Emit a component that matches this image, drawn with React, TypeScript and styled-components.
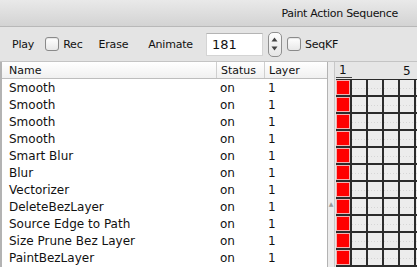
import React from "react";
import styled, { createGlobalStyle } from "styled-components";

const GlobalStyle = createGlobalStyle`
  html, body {
    margin: 0;
    padding: 0;
    width: 417px;
    height: 267px;
    overflow: hidden;
    background: #e6e6e6;
  }
  * { box-sizing: border-box; }
`;

const font = `"DejaVu Sans", "Lucida Grande", Verdana, sans-serif`;

const Window = styled.div`
  width: 417px;
  height: 267px;
  display: flex;
  flex-direction: column;
  font-family: ${font};
  color: #111;
  overflow: hidden;
`;

const TitleBar = styled.div`
  height: 27px;
  flex-shrink: 0;
  display: flex;
  align-items: center;
  justify-content: flex-end;
  padding-right: 19px;
  font-size: 11px;
  letter-spacing: -0.3px;
  background: linear-gradient(#e9e9e9, #d3d3d3);
  border-bottom: 1px solid #b8b8b8;
`;

const Toolbar = styled.div`
  height: 34px;
  flex-shrink: 0;
  display: flex;
  align-items: center;
  padding-left: 12px;
  font-size: 11px;
  letter-spacing: -0.2px;
  background: #e4e4e4;
`;

const Label = styled.span<{ $ml?: number }>`
  margin-left: ${(p) => p.$ml ?? 0}px;
`;

const Check = styled.span<{ $ml?: number }>`
  display: inline-block;
  flex-shrink: 0;
  width: 14px;
  height: 14px;
  margin-left: ${(p) => p.$ml ?? 0}px;
  margin-right: 4px;
  border: 1px solid #8a8a8a;
  border-radius: 3px;
  background: linear-gradient(#ffffff, #e8e8e8);
  box-shadow: inset 0 1px 1px rgba(0, 0, 0, 0.1);
`;

const NumberField = styled.div`
  width: 57px;
  height: 23px;
  flex-shrink: 0;
  margin-left: 13px;
  padding: 3px 0 0 5px;
  background: #fff;
  border: 1px solid #d4d4d4;
  border-top-color: #b4b4b4;
  font-size: 13px;
  letter-spacing: 0;
`;

const Stepper = styled.div`
  width: 14px;
  height: 25px;
  flex-shrink: 0;
  margin-left: 5px;
  border: 1px solid #8f8f8f;
  border-radius: 5px;
  background: linear-gradient(#fdfdfd, #e6e6e6);
  display: flex;
  flex-direction: column;
  align-items: center;
  justify-content: space-around;
  padding: 2px 0;
  svg {
    display: block;
  }
`;

const Content = styled.div`
  flex: 1;
  display: flex;
  border-top: 1px solid #c4c4c4;
  overflow: hidden;
`;

const TablePane = styled.div`
  width: 328px;
  flex-shrink: 0;
  background: #fff;
  border-left: 2px solid #b3b3b3;
  border-right: 1px solid #b3b3b3;
  display: flex;
  flex-direction: column;
`;

const Row = styled.div<{ $header?: boolean }>`
  display: grid;
  grid-template-columns: 214px 48px 1fr;
  height: 17px;
  flex-shrink: 0;
  align-items: center;
  font-size: ${(p) => (p.$header ? 11 : 12)}px;
  ${(p) =>
    p.$header &&
    `
    background: linear-gradient(#ffffff, #f0f0f0);
    border-bottom: 1px solid #bdbdbd;
  `}
`;

const Cell = styled.div<{ $header?: boolean; $first?: boolean }>`
  padding-left: ${(p) => (p.$first ? 7 : p.$header ? 4 : 4)}px;
  height: 100%;
  display: flex;
  align-items: center;
  white-space: nowrap;
  overflow: hidden;
  ${(p) => p.$header && !p.$first && `border-left: 1px solid #cfcfcf;`}
`;

const Splitter = styled.div`
  width: 7px;
  flex-shrink: 0;
  background: #ececec;
  border-right: 1px solid #c8c8c8;
  display: flex;
  align-items: flex-start;
  justify-content: center;
  padding-top: 138px;
  font-size: 6px;
  color: #999;
`;

const GridPane = styled.div`
  flex: 1;
  min-width: 0;
  background: #e6e6e6;
  display: flex;
  flex-direction: column;
  padding-left: 1px;
  overflow: hidden;
`;

const GridHeader = styled.div`
  height: 17px;
  flex-shrink: 0;
  display: flex;
  font-size: 12px;
  align-items: flex-end;
  padding-bottom: 1px;
`;

const FrameNum = styled.div<{ $underline?: boolean }>`
  width: 16px;
  flex-shrink: 0;
  padding-left: 3px;
  line-height: 14px;
  ${(p) => p.$underline && `border-bottom: 1px solid #444;`}
`;

const Grid = styled.div`
  display: grid;
  grid-template-columns: repeat(6, 16px);
  grid-auto-rows: 17px;
  background: #2b2b2b;
  padding-top: 1px;
  width: max-content;
`;

const GridCell = styled.div<{ $on?: boolean }>`
  margin: 0 2px 2px 0;
  background: ${(p) => (p.$on ? "#ff0000" : "#ececec")};
  ${(p) =>
    p.$on
      ? `box-shadow: 0 0 0 1px #f3b2b2 inset;`
      : `background-image: repeating-linear-gradient(90deg, #d6d6d6 0 1px, transparent 1px 3px);
         background-size: 100% 1px;
         background-repeat: no-repeat;
         background-position: 0 8px;`}
`;

const actions = [
  "Smooth",
  "Smooth",
  "Smooth",
  "Smooth",
  "Smart Blur",
  "Blur",
  "Vectorizer",
  "DeleteBezLayer",
  "Source Edge to Path",
  "Size Prune Bez Layer",
  "PaintBezLayer",
];

export default function App() {
  return (
    <>
      <GlobalStyle />
      <Window>
        <TitleBar>Paint Action Sequence</TitleBar>
        <Toolbar>
          <Label>Play</Label>
          <Check $ml={11} />
          <Label>Rec</Label>
          <Label $ml={16}>Erase</Label>
          <Label $ml={20}>Animate</Label>
          <NumberField>181</NumberField>
          <Stepper>
            <svg width="7" height="5" viewBox="0 0 7 5">
              <path d="M3.5 0.5 L6.5 4.5 L0.5 4.5 Z" fill="#444" />
            </svg>
            <svg width="7" height="5" viewBox="0 0 7 5">
              <path d="M0.5 0.5 L6.5 0.5 L3.5 4.5 Z" fill="#444" />
            </svg>
          </Stepper>
          <Check $ml={5} />
          <Label>SeqKF</Label>
        </Toolbar>
        <Content>
          <TablePane>
            <Row $header>
              <Cell $header $first>
                Name
              </Cell>
              <Cell $header>Status</Cell>
              <Cell $header>Layer</Cell>
            </Row>
            {actions.map((a, i) => (
              <Row key={i}>
                <Cell $first>{a}</Cell>
                <Cell>on</Cell>
                <Cell>1</Cell>
              </Row>
            ))}
          </TablePane>
          <Splitter>▲</Splitter>
          <GridPane>
            <GridHeader>
              <FrameNum $underline>1</FrameNum>
              <FrameNum />
              <FrameNum />
              <FrameNum />
              <FrameNum>5</FrameNum>
            </GridHeader>
            <Grid>
              {actions.map((_, r) =>
                Array.from({ length: 6 }).map((__, c) => (
                  <GridCell key={`${r}-${c}`} $on={c === 0} />
                ))
              )}
            </Grid>
          </GridPane>
        </Content>
      </Window>
    </>
  );
}
